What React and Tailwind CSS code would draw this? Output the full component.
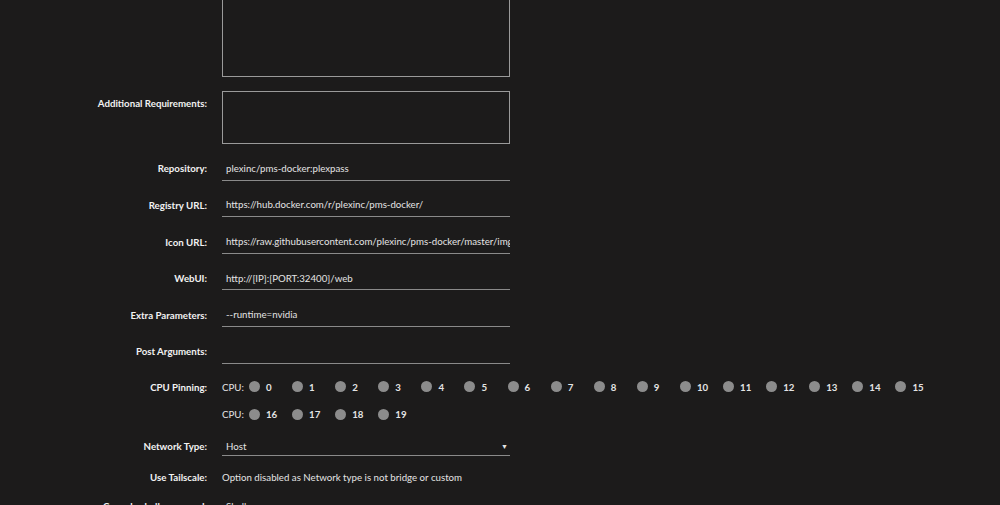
const cpusRow1 = [0, 1, 2, 3, 4, 5, 6, 7, 8, 9, 10, 11, 12, 13, 14, 15];
const cpusRow2 = [16, 17, 18, 19];

function Label({ children, className = '' }) {
  return (
    <div className={`w-[208px] shrink-0 pr-px text-right font-bold text-[#f2f2f2] ${className}`}>
      {children}
    </div>
  );
}

function TextRow({ label, value }) {
  return (
    <div className="flex h-[36.6px] items-end">
      <Label className="flex h-[24px] items-center justify-end">{label}</Label>
      <div className="ml-[14px] flex h-[24px] w-[288px] items-center overflow-hidden whitespace-nowrap border-b border-[#8a8a8a] pl-[4px] text-[#e4e4e4]">
        {value}
      </div>
    </div>
  );
}

function CpuRow({ cpus }) {
  return (
    <div className="flex items-center">
      <span className="w-[27px] text-[#e4e4e4]">CPU:</span>
      {cpus.map(n => (
        <div key={n} className="flex w-[43.1px] shrink-0 items-center gap-[6px]">
          <span className="h-[11px] w-[11px] rounded-full bg-[#8c8c8c]" />
          <span className="font-bold text-[#e4e4e4]">{n}</span>
        </div>
      ))}
    </div>
  );
}

export default function App() {
  return (
    <div className="h-[505px] overflow-hidden bg-[#1c1b1b] text-[9.7px] font-['Lato',sans-serif]">
      <div className="-mt-[30px] flex flex-col">
        <div className="flex">
          <Label />
          <div className="ml-[14px] h-[107px] w-[288px] border border-[#9a9a9a]" />
        </div>

        <div className="mt-[14px] flex">
          <Label className="pt-[5px]">Additional Requirements:</Label>
          <div className="ml-[14px] h-[53px] w-[288px] border border-[#9a9a9a]" />
        </div>

        <TextRow label="Repository:" value="plexinc/pms-docker:plexpass" />
        <TextRow label="Registry URL:" value="https://hub.docker.com/r/plexinc/pms-docker/" />
        <TextRow label="Icon URL:" value="https://raw.githubusercontent.com/plexinc/pms-docker/master/img/plex-server.png" />
        <TextRow label="WebUI:" value="http://[IP]:[PORT:32400]/web" />
        <TextRow label="Extra Parameters:" value="--runtime=nvidia" />
        <TextRow label="Post Arguments:" value="" />

        <div className="mt-[16px] flex">
          <Label>CPU Pinning:</Label>
          <div className="ml-[14px] flex flex-col gap-[13px]">
            <CpuRow cpus={cpusRow1} />
            <CpuRow cpus={cpusRow2} />
          </div>
        </div>

        <div className="mt-[16px] flex items-end">
          <Label className="flex h-[18px] items-center justify-end">Network Type:</Label>
          <div className="ml-[14px] flex h-[18px] w-[288px] items-center justify-between border-b border-[#8a8a8a] pl-[4px] pr-[2px] text-[#e4e4e4]">
            <span>Host</span>
            <span className="text-[7px]">▼</span>
          </div>
        </div>

        <div className="mt-[14px] flex">
          <Label>Use Tailscale:</Label>
          <div className="ml-[14px] text-[#e4e4e4]">Option disabled as Network type is not bridge or custom</div>
        </div>

        <div className="mt-[15px] flex">
          <Label>Console shell command:</Label>
          <div className="ml-[14px] pl-[4px] text-[#e4e4e4]">Shell</div>
        </div>
      </div>
    </div>
  );
}
